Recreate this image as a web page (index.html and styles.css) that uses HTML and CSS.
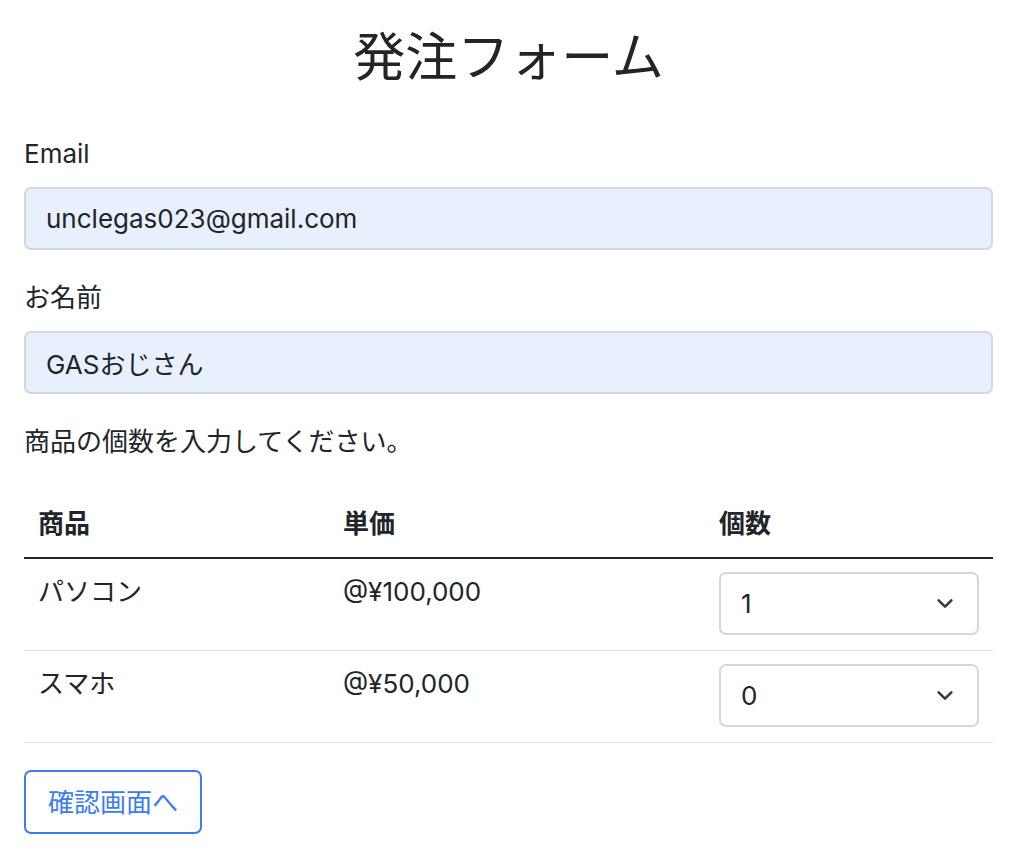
FILE: index.html
```html
<!DOCTYPE html>
<html lang="ja">
<head>
  <meta charset="UTF-8" />
  <meta name="viewport" content="width=device-width, initial-scale=1.0"/>
  <title>発注フォーム</title>
  <link rel="stylesheet" href="styles.css">
</head>
<body>
  <div class="container">
    <h1 class="title">発注フォーム</h1>

    <form class="order-form">
      <div class="field">
        <label for="email" class="form-label">Email</label>
        <input type="email" id="email" class="form-control" value="unclegas023@gmail.com" />
      </div>

      <div class="field">
        <label for="name" class="form-label">お名前</label>
        <input type="text" id="name" class="form-control" value="GASおじさん" />
      </div>

      <p class="hint">商品の個数を入力してください。</p>

      <table class="table">
        <thead>
          <tr>
            <th class="col-item">商品</th>
            <th class="col-price">単価</th>
            <th class="col-qty">個数</th>
          </tr>
        </thead>
        <tbody>
          <tr>
            <td>パソコン</td>
            <td>@¥100,000</td>
            <td>
              <select class="form-select" name="pc">
                <option>0</option>
                <option selected>1</option>
                <option>2</option>
                <option>3</option>
              </select>
            </td>
          </tr>
          <tr>
            <td>スマホ</td>
            <td>@¥50,000</td>
            <td>
              <select class="form-select" name="phone">
                <option selected>0</option>
                <option>1</option>
                <option>2</option>
                <option>3</option>
              </select>
            </td>
          </tr>
        </tbody>
      </table>

      <button type="button" class="btn-outline">確認画面へ</button>
    </form>
  </div>
</body>
</html>
```

FILE: styles.css
```css
body {
  margin: 0;
  font-family: Inter, "Noto Sans CJK JP", sans-serif;
  font-size: 26px;
  line-height: 1.5;
  color: #212529;
  background: #fff;
}

.container {
  width: 969px;
  padding: 0 0 0 24px;
}

.title {
  margin: 27px 0 45px;
  font-size: 52px;
  font-weight: 400;
  line-height: 1.2;
  text-align: center;
}

.field {
  margin-bottom: 28px;
}

.form-label {
  display: block;
  margin-bottom: 14px;
}

.form-control {
  display: block;
  width: 100%;
  height: 63px;
  box-sizing: border-box;
  padding: 0 20px;
  font: inherit;
  color: #212529;
  background-color: #e8f0fe;
  border: 2px solid #d3d8de;
  border-radius: 7px;
}

.hint {
  margin: 0 0 30px;
}

.table {
  width: 100%;
  border-collapse: collapse;
  margin-bottom: 27px;
}

.table th,
.table td {
  padding: 13px 14px 15px;
  text-align: left;
  vertical-align: top;
}

.table th {
  padding-bottom: 14px;
  font-weight: 700;
  border-bottom: 2px solid #212529;
}

.table td {
  border-bottom: 1.5px solid #dee2e6;
}

.col-item { width: 277px; }
.col-price { width: 348px; }

.form-select {
  display: block;
  width: 100%;
  height: 63px;
  box-sizing: border-box;
  padding: 0 60px 0 20px;
  font: inherit;
  color: #212529;
  background-color: #fff;
  background-image: url("data:image/svg+xml,%3csvg xmlns='http://www.w3.org/2000/svg' viewBox='0 0 16 16'%3e%3cpath fill='none' stroke='%23343a40' stroke-linecap='round' stroke-linejoin='round' stroke-width='2.4' d='M2 5l6 6 6-6'/%3e%3c/svg%3e");
  background-repeat: no-repeat;
  background-position: right 21px center;
  background-size: 22px 17px;
  border: 2px solid #d3d8de;
  border-radius: 7px;
  appearance: none;
  -webkit-appearance: none;
}

.btn-outline {
  display: inline-block;
  height: 64px;
  padding: 0 22px;
  font: inherit;
  color: #3b7cf4;
  background: #fff;
  border: 2px solid #3b7cf4;
  border-radius: 7px;
  cursor: pointer;
}
```
